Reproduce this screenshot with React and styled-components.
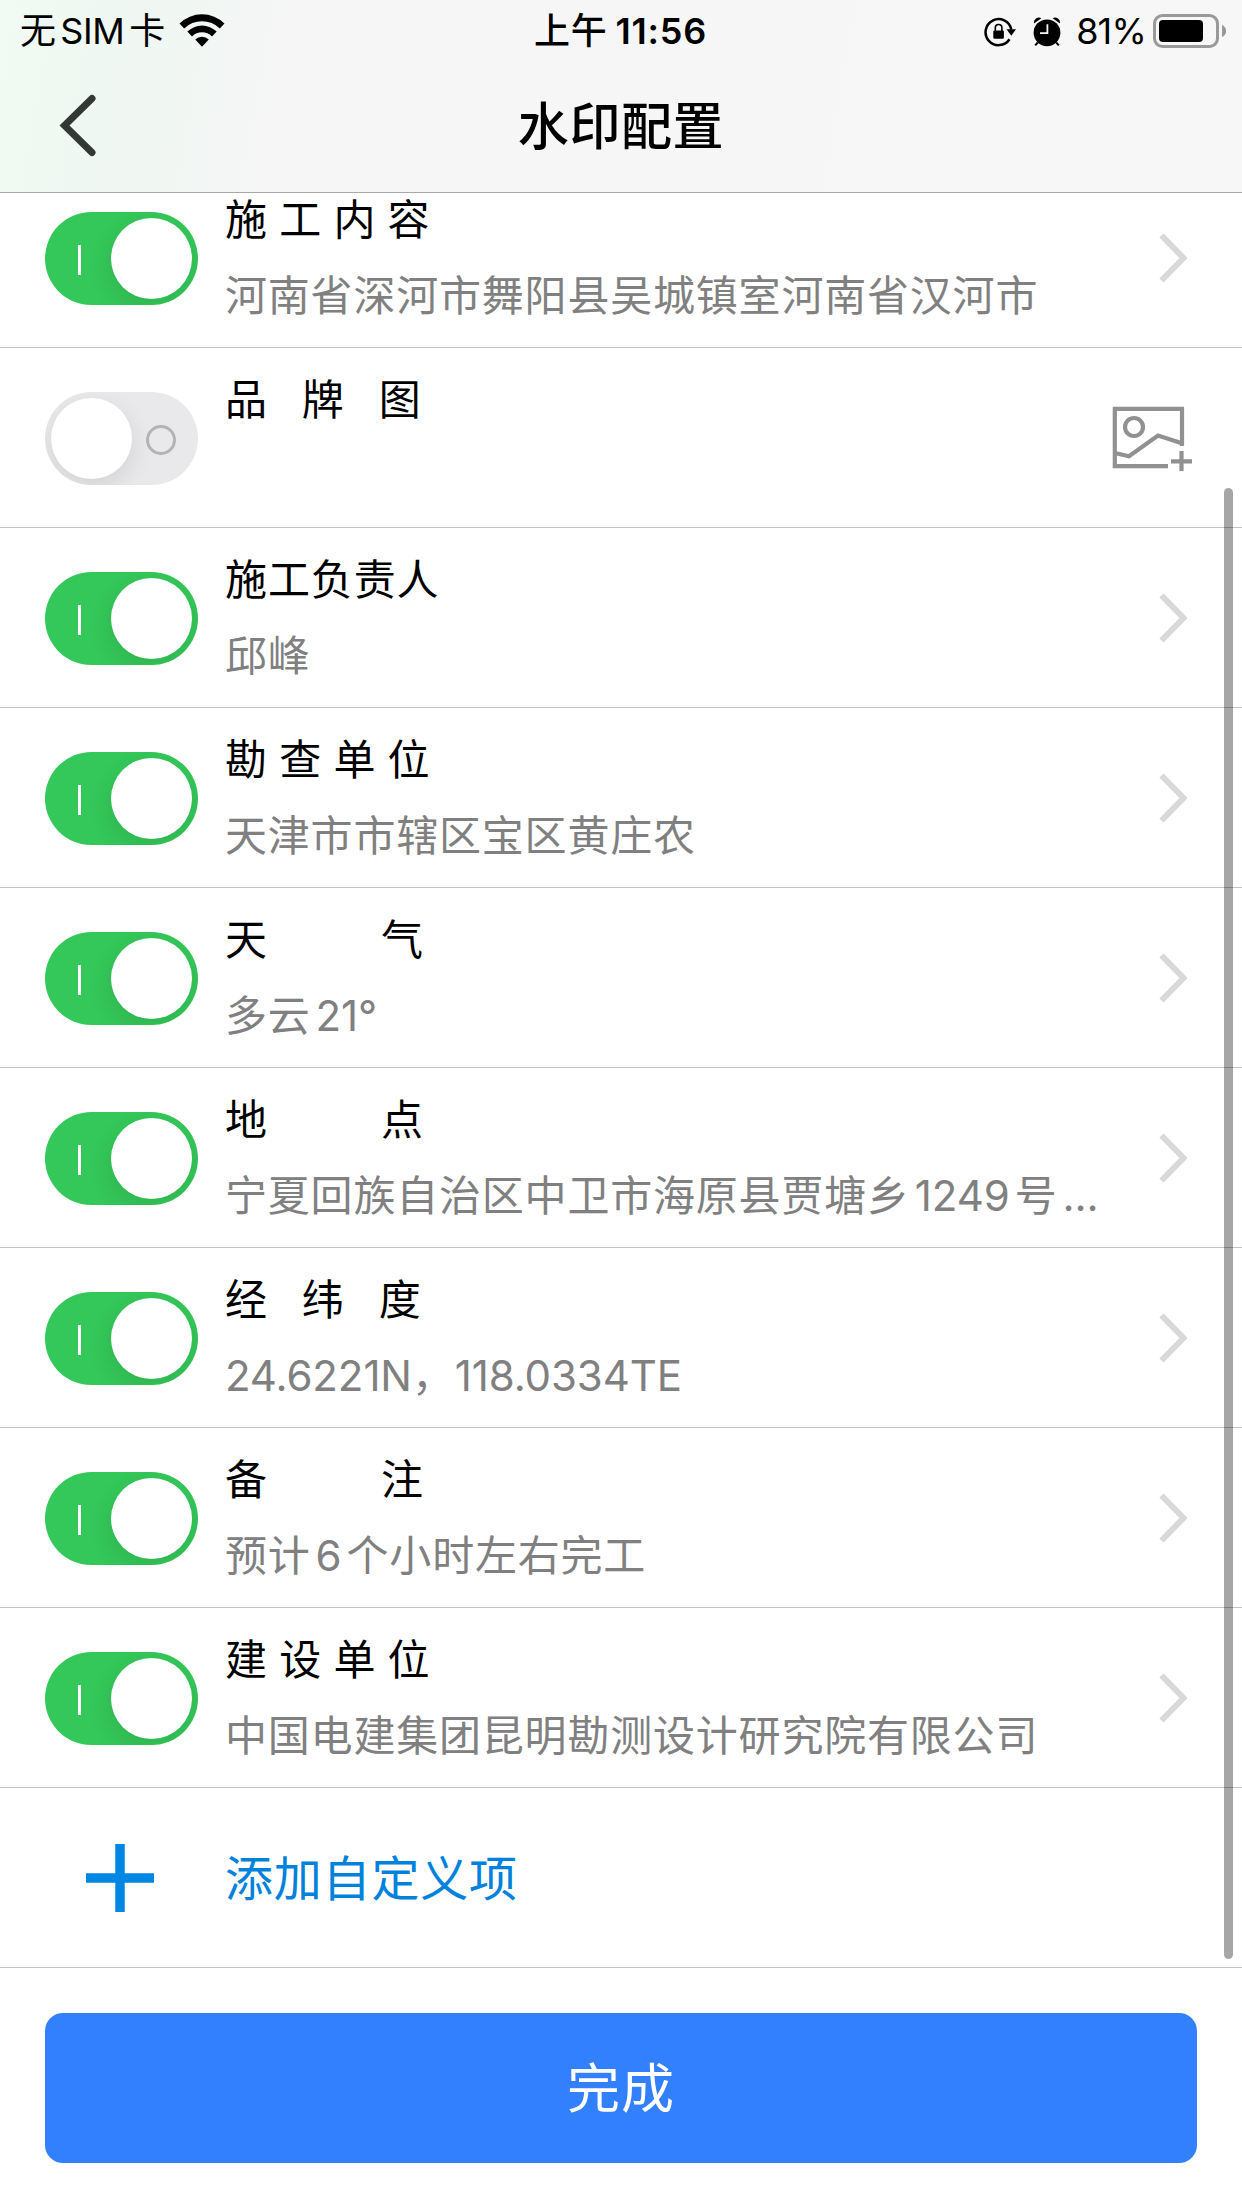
import React, { useState } from 'react';
import styled, { createGlobalStyle } from 'styled-components';

const GlobalStyle = createGlobalStyle`
  * {
    box-sizing: border-box;
  }
  body {
    margin: 0;
    background-color: #fff;
    font-family: Inter, 'Noto Sans CJK SC', sans-serif;
  }
  button {
    font-family: inherit;
    border: none;
    padding: 0;
    background: none;
    cursor: pointer;
  }
`;

const Page = styled.div`
  display: flex;
  flex-direction: column;
  width: 1242px;
  height: 2208px;
  overflow: hidden;
  background-color: #fff;
`;

const Header = styled.header`
  height: 193px;
  flex-shrink: 0;
  border-bottom: 1px solid #a9a9a9;
  background: linear-gradient(100deg, #f1faf3 0%, #eff7f2 10%, #f6f6f6 24%, #f7f7f7 100%);
`;

const StatusBar = styled.div`
  display: grid;
  grid-template-columns: 1fr auto 1fr;
  align-items: center;
  height: 60px;
  padding: 0 16px 0 20px;
  font-size: 36px;
  line-height: 60px;
  color: #000;
`;

const StatusGroup = styled.div`
  display: flex;
  align-items: center;
  justify-content: ${(props) => (props.$end ? 'flex-end' : 'flex-start')};
  svg {
    display: block;
    flex-shrink: 0;
  }
`;

const StatusText = styled.span`
  padding-top: 1px;
`;

const Carrier = styled(StatusText)`
  margin-right: 14px;
  letter-spacing: -0.4px;
  word-spacing: -5px;
`;

const Clock = styled(StatusText)`
  margin-right: 5px;
  font-weight: 600;
  letter-spacing: 0.8px;
  word-spacing: -2px;
  span {
    font-weight: 500;
  }
`;

const Percent = styled(StatusText)`
  margin: 0 7px 0 15px;
  letter-spacing: -0.8px;
`;

const StatusIcons = styled.span`
  display: flex;
  align-items: center;
  gap: 17px;
  padding-top: 2px;
`;

const NavBar = styled.div`
  display: grid;
  grid-template-columns: 160px 1fr 160px;
  align-items: center;
  height: 132px;
`;

const BackButton = styled.button`
  width: 160px;
  height: 132px;
  padding-left: 58px;
  svg {
    display: block;
  }
`;

const Title = styled.h1`
  margin: 0;
  padding-top: 2px;
  text-align: center;
  font-size: 51px;
  line-height: 130px;
  font-weight: 500;
  letter-spacing: 0.6px;
  color: #000;
`;

const ListView = styled.main`
  position: relative;
  height: 1775px;
  flex-shrink: 0;
`;

// the list is scrolled down a little, so the first row starts under the header
const List = styled.div`
  margin-top: -25px;
`;

const Row = styled.div`
  display: flex;
  align-items: center;
  height: 180px;
  padding: 0 45px;
  border-bottom: 1px solid #c4c4c6;
`;

const Switch = styled.button`
  display: flex;
  align-items: center;
  justify-content: space-between;
  flex-direction: ${(props) => (props.$on ? 'row' : 'row-reverse')};
  width: 153px;
  height: 93px;
  flex-shrink: 0;
  margin-top: 1px;
  padding: ${(props) => (props.$on ? '0 6px 0 33px' : '0 22px 0 6px')};
  border-radius: 47px;
  overflow: hidden;
  background-color: ${(props) => (props.$on ? '#34c759' : '#e9e9eb')};
`;

const OnMark = styled.span`
  width: 3px;
  height: 30px;
  margin-top: 3px;
  background-color: #fff;
`;

const OffMark = styled.span`
  width: 30px;
  height: 30px;
  margin-top: 3px;
  border: 3px solid #b3b3b5;
  border-radius: 50%;
`;

const Thumb = styled.span`
  width: 81px;
  height: 81px;
  border-radius: 50%;
  background-color: #fff;
  box-shadow: 0 8px 24px rgba(0, 0, 0, 0.1);
`;

const Content = styled.div`
  flex: 1;
  min-width: 0;
  height: 100%;
  margin-left: 27px;
  padding-top: 26px;
`;

const Name = styled.div`
  height: 46px;
  line-height: 46px;
  font-size: 42px;
  font-family: 'Noto Sans CJK SC', sans-serif;
  letter-spacing: 0.9px;
  word-spacing: 1px;
  white-space: pre;
  color: #000;
`;

const Value = styled.div`
  height: 60px;
  margin-top: 26px;
  line-height: 60px;
  font-size: 42px;
  letter-spacing: 0.8px;
  white-space: nowrap;
  color: #808080;
`;

const Latin = styled.span`
  margin: 0 ${(props) => (props.$spaced ? '5px' : '0')};
  letter-spacing: -0.1px;
`;

const Accessory = styled.span`
  display: flex;
  flex-shrink: 0;
  margin-right: ${(props) => (props.$image ? 5 : 10)}px;
`;

const AddRow = styled(Row)`
  cursor: pointer;
  svg {
    display: block;
    margin-left: 39px;
  }
`;

const AddLabel = styled.span`
  margin-left: 71px;
  padding-bottom: 6px;
  font-size: 48px;
  letter-spacing: 0.8px;
  color: #0082dc;
`;

const ScrollThumb = styled.div`
  position: absolute;
  top: 295px;
  right: 9px;
  width: 9px;
  height: 1471px;
  border-radius: 5px;
  background-color: rgba(0, 0, 0, 0.35);
`;

const Footer = styled.footer`
  padding: 45px;
`;

const DoneButton = styled.button`
  display: block;
  width: 100%;
  height: 150px;
  padding-top: 2px;
  border-radius: 18px;
  background-color: #3380ff;
  color: #fff;
  font-size: 53px;
  line-height: 148px;
  letter-spacing: 1px;
`;

const WifiIcon = () => (
  <svg width="46" height="34" viewBox="0 0 46 34">
    <path d="M0.5 9.6A32 32 0 0 1 45.5 9.6L40.8 14.5A25.2 25.2 0 0 0 5.2 14.5Z" />
    <path d="M8.3 17.6A21 21 0 0 1 37.7 17.6L33 22.4A14.2 14.2 0 0 0 13 22.4Z" />
    <path d="M16.2 25.6A9.8 9.8 0 0 1 29.8 25.6L23 32.8Z" />
  </svg>
);

const LockIcon = () => (
  <svg width="32" height="30" viewBox="0 0 32 30">
    <path d="M25.5 22.2A13 13 0 1 1 27.3 12.5" fill="none" stroke="#000" strokeWidth="2.5" />
    <path d="M22.5 12.2H32L27.3 18.8Z" />
    <rect x="9.3" y="13.5" width="10.6" height="8.3" rx="1.2" />
    <path d="M11.3 14V10.8a3.3 3.3 0 0 1 6.6 0V14" fill="none" stroke="#000" strokeWidth="1.6" />
  </svg>
);

const AlarmIcon = () => (
  <svg width="28" height="30" viewBox="0 0 28 30">
    <circle cx="14" cy="15.8" r="13.4" />
    <path d="M1 6.5A5 5 0 0 1 8.4 1.2ZM27 6.5A5 5 0 0 0 19.6 1.2Z" />
    <path d="M4.8 25.5L2.2 28.4M23.2 25.5L25.8 28.4" stroke="#000" strokeWidth="2" />
    <path d="M14.4 7.2V16.2H7" fill="none" stroke="#f7f7f7" strokeWidth="1.8" />
  </svg>
);

const BatteryIcon = () => (
  <svg width="73" height="34" viewBox="0 0 73 34">
    <rect x="1.5" y="1.5" width="63" height="31" rx="8" fill="none" stroke="#999" strokeWidth="3" />
    <rect x="6" y="6" width="44" height="22" rx="4" />
    <path d="M69 11C74.5 13 74.5 21 69 23Z" fill="#999" />
  </svg>
);

const BackIcon = () => (
  <svg width="40" height="64" viewBox="0 0 40 64">
    <path
      d="M34 4.5L6.5 31.5L34 58.5"
      fill="none"
      stroke="#333735"
      strokeWidth="7"
      strokeLinecap="round"
    />
  </svg>
);

const ChevronIcon = () => (
  <svg width="28" height="50" viewBox="0 0 28 50">
    <path d="M2.5 2.5L24.5 25L2.5 47.5" fill="none" stroke="#d8d8d8" strokeWidth="6" />
  </svg>
);

const AddImageIcon = () => (
  <svg width="80" height="68" viewBox="0 0 80 68" fill="none" stroke="#919191" strokeWidth="4.2">
    <path d="M56 62.2H2.8V4.8H70V42" />
    <circle cx="22" cy="23" r="9" />
    <path d="M3 49L17 52.3L46 31.5L70 39.2" />
    <path d="M69.5 47V67M59 57.3H80" />
  </svg>
);

const PlusIcon = () => (
  <svg width="70" height="70" viewBox="0 0 70 70">
    <path d="M36 1V69M2 35H70" stroke="#0086e3" strokeWidth="9.5" />
  </svg>
);

// digits and letters get a small gap where they touch chinese characters
const MixedText = ({ text }) => {
  const parts = text.split(/([0-9A-Z.°]+)/);
  return parts.map((part, i) =>
    i % 2 === 1 ? (
      <Latin key={i} $spaced={parts[0] !== ''}>
        {part}
      </Latin>
    ) : (
      part
    )
  );
};

const initialItems = [
  { name: '施 工 内 容', value: '河南省深河市舞阳县吴城镇室河南省汉河市', on: true },
  { name: '品   牌   图', value: '', on: false, image: true },
  { name: '施工负责人', value: '邱峰', on: true },
  { name: '勘 查 单 位', value: '天津市市辖区宝区黄庄农', on: true },
  { name: '天          气', value: '多云21°', on: true },
  { name: '地          点', value: '宁夏回族自治区中卫市海原县贾塘乡1249号...', on: true },
  { name: '经   纬   度', value: '24.6221N，118.0334TE', on: true },
  { name: '备          注', value: '预计6个小时左右完工', on: true },
  { name: '建 设 单 位', value: '中国电建集团昆明勘测设计研究院有限公司', on: true },
];

const App = () => {
  const [items, setItems] = useState(initialItems);

  const toggle = (index) => {
    setItems(items.map((item, i) => (i === index ? { ...item, on: !item.on } : item)));
  };

  return (
    <Page>
      <GlobalStyle />
      <Header>
        <StatusBar>
          <StatusGroup>
            <Carrier>无 SIM 卡</Carrier>
            <WifiIcon />
          </StatusGroup>
          <Clock>
            <span>上午</span> 11:56
          </Clock>
          <StatusGroup $end>
            <StatusIcons>
              <LockIcon />
              <AlarmIcon />
            </StatusIcons>
            <Percent>81%</Percent>
            <BatteryIcon />
          </StatusGroup>
        </StatusBar>
        <NavBar>
          <BackButton>
            <BackIcon />
          </BackButton>
          <Title>水印配置</Title>
        </NavBar>
      </Header>
      <ListView>
        <List>
          {items.map((item, i) => (
            <Row key={item.name}>
              <Switch $on={item.on} onClick={() => toggle(i)}>
                {item.on ? <OnMark /> : <OffMark />}
                <Thumb />
              </Switch>
              <Content>
                <Name>{item.name}</Name>
                <Value>
                  <MixedText text={item.value} />
                </Value>
              </Content>
              <Accessory $image={item.image}>
                {item.image ? <AddImageIcon /> : <ChevronIcon />}
              </Accessory>
            </Row>
          ))}
          <AddRow>
            <PlusIcon />
            <AddLabel>添加自定义项</AddLabel>
          </AddRow>
        </List>
        <ScrollThumb />
      </ListView>
      <Footer>
        <DoneButton>完成</DoneButton>
      </Footer>
    </Page>
  );
};

export default App;
